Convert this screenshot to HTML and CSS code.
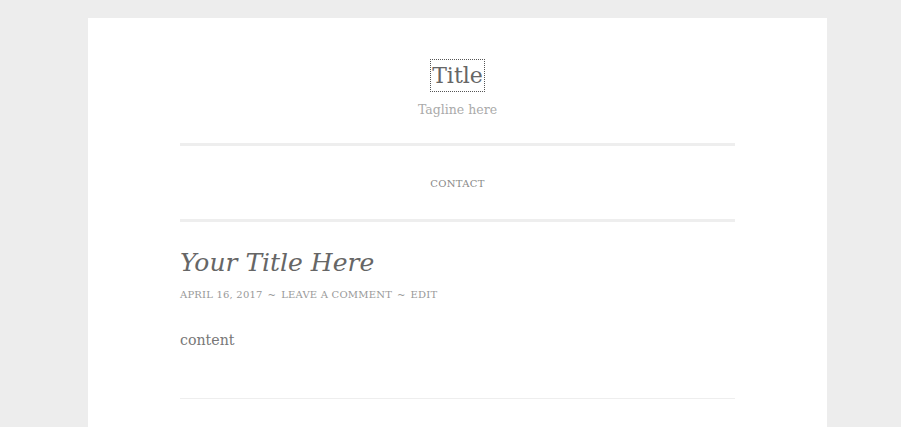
FILE: index.html
```html
<!DOCTYPE html>
<html>
<head>
<meta charset="utf-8">
<link rel="stylesheet" href="styles.css">
</head>
<body>
<div class="page">
  <header class="site-header">
    <h1 class="site-title"><a href="#">Title</a></h1>
    <p class="tagline">Tagline here</p>
  </header>
  <nav class="nav">
    <a href="#">Contact</a>
  </nav>
  <article class="post">
    <h2 class="post-title">Your Title Here</h2>
    <div class="meta">
      <span>April 16, 2017</span><span class="sep">~</span><span>Leave a comment</span><span class="sep">~</span><span>Edit</span>
    </div>
    <div class="content">content</div>
  </article>
</div>
</body>
</html>
```
FILE: styles.css
```css
html, body {
  margin: 0;
  padding: 0;
  background: #ededed;
  height: 100%;
  overflow: hidden;
}
body {
  font-family: "DejaVu Serif", serif;
  color: #666;
}
.page {
  margin: 18px 0 0 88px;
  width: 739px;
  min-height: 420px;
  background: #fff;
  padding: 0 92px;
  box-sizing: border-box;
}
.site-header {
  text-align: center;
  padding-top: 42px;
  padding-bottom: 26px;
}
.site-title {
  margin: 0;
  font-size: 22px;
  font-weight: normal;
  line-height: 31px;
}
.site-title a {
  display: inline-block;
  vertical-align: top;
  color: #666;
  text-decoration: none;
  outline: 1px dotted #555;
  padding: 0 1px;
  line-height: 31px;
}
.tagline {
  margin: 11px 0 0;
  font-size: 12.5px;
  color: #aaa;
  font-weight: 300;
}
.nav {
  border-top: 3px solid #eee;
  border-bottom: 3px solid #eee;
  text-align: center;
  padding: 29px 0 28px;
  line-height: 14px;
}
.nav a {
  font-size: 10px;
  letter-spacing: 0.3px;
  text-transform: uppercase;
  color: #888;
  text-decoration: none;
}
.post {
  padding-top: 21px;
  border-bottom: 1px solid #eee;
  padding-bottom: 46px;
}
.post-title {
  margin: 0;
  font-size: 25px;
  font-style: italic;
  font-weight: normal;
  line-height: 40px;
  color: #666;
}
.meta {
  margin-top: 5px;
  font-size: 10px;
  letter-spacing: 0.2px;
  text-transform: uppercase;
  color: #999;
  line-height: 14px;
}
.sep {
  margin: 0 5px;
}
.content {
  margin-top: 26px;
  font-size: 14.2px;
  color: #777;
  line-height: 24px;
}
```
